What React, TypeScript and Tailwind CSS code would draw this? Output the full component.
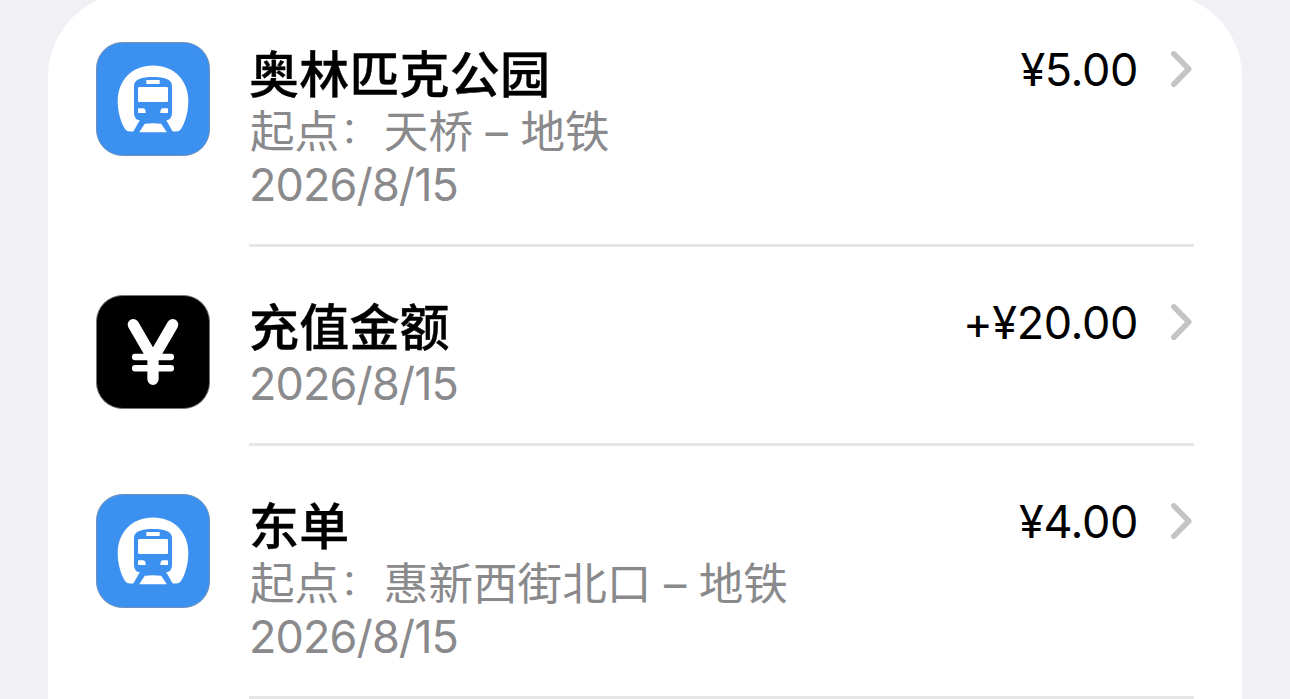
type Transaction = {
    kind: 'metro' | 'topup';
    title: string;
    station?: string;
    date: string;
    amount: string;
};

const transactions: Transaction[] = [
    { kind: 'metro', title: '奥林匹克公园', station: '天桥 – 地铁', date: '2026/8/15', amount: '¥5.00' },
    { kind: 'topup', title: '充值金额', date: '2026/8/15', amount: '+¥20.00' },
    { kind: 'metro', title: '东单', station: '惠新西街北口 – 地铁', date: '2026/8/15', amount: '¥4.00' },
];

function MetroIcon() {
    return (
        <svg viewBox="0 0 114 114" className="size-[114px] shrink-0">
            <rect x="0.5" y="0.5" width="113" height="113" rx="26" fill="#3c91f0" stroke="#6f8fb5" />
            {/* Tunnel */}
            <path
                d="M57 23.500C36 23.500 21.700 38.500 21.700 59C21.700 69.500 24.600 80 29 87Q30.800 89.500 34 89.500H80Q83.200 89.500 85 87C89.400 80 92.300 69.500 92.300 59C92.300 38.500 78 23.500 57 23.500Z"
                fill="#fff"
            />
            {/* Tracks */}
            <path d="M44.500 77H69.500L77.500 91H36.500Z" fill="#3c91f0" />
            <path d="M48.800 81.800Q57 80.500 65.200 81.800L70.800 90.200H43.200Z" fill="#fff" />
            {/* Train */}
            <path
                d="M38 44C38 37 46 35 57 35S76 37 76 44V71Q76 78.500 68.500 78.500H45.500Q38 78.500 38 71Z"
                fill="#3c91f0"
            />
            <rect x="50.300" y="38" width="13.400" height="4" rx="0.600" fill="#fff" />
            <rect x="42" y="45" width="30" height="15" rx="1.300" fill="#fff" />
            <path d="M42.600 66.300H47Q49.700 66.300 49.700 71H42.600Q42 71 42 70.400V67Q42 66.300 42.600 66.300Z" fill="#fff" />
            <path d="M71.400 66.300H67Q64.300 66.300 64.300 71H71.400Q72 71 72 70.400V67Q72 66.300 71.400 66.300Z" fill="#fff" />
        </svg>
    );
}

function YenIcon() {
    return (
        <svg viewBox="0 0 114 114" className="size-[114px] shrink-0">
            <rect x="0.5" y="0.5" width="113" height="113" rx="26" fill="#000" stroke="#777" />
            <g fill="none" stroke="#fff" strokeLinecap="round">
                <path d="M37.300 29.700L57 63.500L76.700 29.700M57 63V84.300" strokeWidth="11.300" />
                <path d="M39.200 62H74.800M39.200 73.300H74.800" strokeWidth="6.500" />
            </g>
        </svg>
    );
}

function Chevron() {
    return (
        <svg viewBox="0 0 24 40" className="mt-[55px] mr-12 ml-8 h-10 w-6 shrink-0" fill="none">
            <path d="M3.800 4.800L18.800 20L3.800 35.200" stroke="#c4c4c6" strokeWidth="5.500" strokeLinecap="round" strokeLinejoin="round" />
        </svg>
    );
}

function TransactionRow({ item }: { item: Transaction }) {
    return (
        <li className="flex pl-12">
            <div className="pt-12">{item.kind === 'metro' ? <MetroIcon /> : <YenIcon />}</div>
            <div className="ml-[39px] flex min-w-0 flex-1 flex-col">
                <div className="flex">
                    <div className="min-w-0 flex-1 pt-[51px] pb-[33px] text-[45px] text-[#8a8a8d]">
                        <h2 className="text-[50px] leading-[60px] font-medium tracking-[0.2px] text-black [-webkit-text-stroke:0.4px_black]">
                            {item.title}
                        </h2>
                        {item.station && (
                            <p className="pl-px text-[44.600px] leading-[54px]">
                                起点<span className="relative -top-0.5 -left-[3px] inline-block scale-80">：</span>
                                {item.station}
                            </p>
                        )}
                        <p className="leading-[52px] tracking-[-0.9px]">{item.date}</p>
                    </div>
                    <span className="pt-[46px] text-[45px] leading-[60px] tracking-[-0.4px] text-black">{item.amount}</span>
                    <Chevron />
                </div>
                <div className="mr-12 h-[3px] bg-[#e6e6e6]" />
            </div>
        </li>
    );
}

export default function App() {
    return (
        <div className="h-[699px] overflow-hidden bg-[#f1f0f5] px-12 font-['Inter','Noto_Sans_CJK_SC',sans-serif]">
            <ul className="-mt-[7px] h-[720px] w-[1194px] rounded-t-[84px] bg-white pt-px">
                {transactions.map((item) => (
                    <TransactionRow key={item.title} item={item} />
                ))}
            </ul>
        </div>
    );
}
